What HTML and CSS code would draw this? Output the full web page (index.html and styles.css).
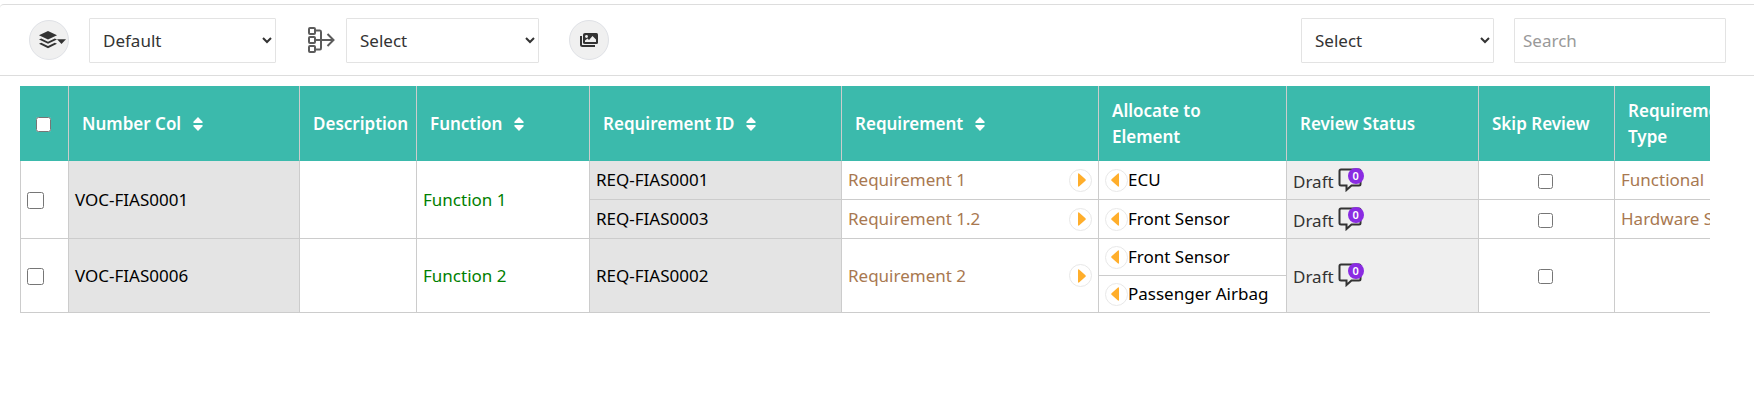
FILE: index.html
```
<!DOCTYPE html>
<html lang="en">
<head>
    <meta charset="UTF-8">
    <meta name="viewport" content="width=device-width, initial-scale=1.0">
    <title>Requirements</title>
    <link rel="stylesheet" href="styles.css">
</head>
<body>
    <!-- shared icons -->
    <svg class="sprite" aria-hidden="true">
        <symbol id="sort" viewBox="0 0 10 14">
            <path d="M5 0L9.6 4.8Q10 6 9 6H1Q0 6 .4 4.8zM5 14L.4 9.200Q0 8 1 8H9Q10 8 9.600 9.200z" fill="#fff"/>
        </symbol>
        <symbol id="caret" viewBox="0 0 8 14">
            <path d="M0 1.200Q0 0 1 .5L7.500 6.300Q8 7 7.500 7.700L1 13.500Q0 14 0 12.800z" fill="#ffae2b"/>
        </symbol>
        <symbol id="comment" viewBox="0 0 24 24">
            <path d="M3 1.500H21Q22.500 1.500 22.500 3V16Q22.500 17.500 21 17.500H13.500L8.500 22V17.500H3Q1.500 17.500 1.500 16V3Q1.500 1.500 3 1.500z" fill="none" stroke="#333" stroke-width="2"/>
        </symbol>
    </svg>

    <div class="toolbar">
        <button class="round-button layers-button" type="button" aria-label="Layers">
            <svg width="27" height="18" viewBox="0 0 27 18" fill="#333">
                <path d="M9 0L18 4.300 9 8.600 0 4.300z"/>
                <path d="M0 8.500L2.200 7.500 9 10.700 15.800 7.500 18 8.500 9 12.800z"/>
                <path d="M0 12.700L2.200 11.700 9 14.900 15.800 11.700 18 12.700 9 17.200z"/>
                <path d="M18 8.200H27L22.500 13z"/>
            </svg>
        </button>
        <select class="field view-select" aria-label="View">
            <option>Default</option>
        </select>
        <svg class="merge-icon" width="28" height="28" viewBox="0 0 28 28" fill="none" stroke="#5c5c5c" stroke-width="2">
            <rect x="2" y="2" width="6" height="6" rx="1"/>
            <rect x="2" y="11" width="6" height="6" rx="1"/>
            <rect x="2" y="20" width="6" height="6" rx="1"/>
            <path d="M8 4.500H13Q14 4.500 14 6V22Q14 23.500 13 23.500H8M8 14H27M20.500 8L26.500 14 20.500 20"/>
        </svg>
        <select class="field" aria-label="Merge">
            <option>Select</option>
        </select>
        <button class="round-button image-button" type="button" aria-label="Images">
            <svg width="18" height="14" viewBox="0 0 18 14">
                <path d="M1 3V11.500Q1 13 2.500 13H15" fill="none" stroke="#333" stroke-width="2"/>
                <path d="M5 0H16.500Q18 0 18 1.500V9.500Q18 11 16.500 11H5Q3 11 3 9.500V1.500Q3 0 5 0z" fill="#333"/>
                <circle cx="6.500" cy="3.500" r="1.400" fill="#f0f0f0"/>
                <path d="M5 9V7.500L7.500 5.500 9 7 12.500 3 16 6.500V9z" fill="#f0f0f0"/>
            </svg>
        </button>
        <select class="field filter-select" aria-label="Filter">
            <option>Select</option>
        </select>
        <input class="field search" type="text" placeholder="Search" aria-label="Search">
    </div>

    <div class="table-wrap">
        <table class="grid">
            <colgroup>
                <col class="col-check">
                <col class="col-number">
                <col class="col-description">
                <col class="col-function">
                <col class="col-req-id">
                <col class="col-req">
                <col class="col-element">
                <col class="col-status">
                <col class="col-skip">
                <col class="col-type">
            </colgroup>
            <thead>
                <tr>
                    <th class="select-all"><input type="checkbox" class="check" aria-label="Select all"></th>
                    <th>Number Col <svg class="sort"><use href="#sort"/></svg></th>
                    <th>Description</th>
                    <th>Function <svg class="sort"><use href="#sort"/></svg></th>
                    <th>Requirement ID <svg class="sort"><use href="#sort"/></svg></th>
                    <th>Requirement <svg class="sort"><use href="#sort"/></svg></th>
                    <th class="allocate">Allocate to Element</th>
                    <th>Review Status</th>
                    <th>Skip Review</th>
                    <th>Requirement Type</th>
                </tr>
            </thead>
            <tbody>
                <tr class="row">
                    <td class="first" rowspan="2"><input type="checkbox" class="check check-row" aria-label="Select VOC-FIAS0001"></td>
                    <td class="locked" rowspan="2">VOC-FIAS0001</td>
                    <td rowspan="2"></td>
                    <td class="function" rowspan="2">Function 1</td>
                    <td class="locked">REQ-FIAS0001</td>
                    <td class="brown"><div class="split">Requirement 1<button class="arrow" type="button" aria-label="Expand"><svg><use href="#caret"/></svg></button></div></td>
                    <td><div class="element"><button class="arrow back" type="button" aria-label="Back"><svg><use href="#caret"/></svg></button>ECU</div></td>
                    <td class="status"><div class="review">Draft<span class="comment"><svg><use href="#comment"/></svg><span class="badge">0</span></span></div></td>
                    <td class="skip"><input type="checkbox" class="check" aria-label="Skip review of REQ-FIAS0001"></td>
                    <td class="brown">Functional</td>
                </tr>
                <tr class="row">
                    <td class="locked">REQ-FIAS0003</td>
                    <td class="brown"><div class="split">Requirement 1.2<button class="arrow" type="button" aria-label="Expand"><svg><use href="#caret"/></svg></button></div></td>
                    <td><div class="element"><button class="arrow back" type="button" aria-label="Back"><svg><use href="#caret"/></svg></button>Front Sensor</div></td>
                    <td class="status"><div class="review">Draft<span class="comment"><svg><use href="#comment"/></svg><span class="badge">0</span></span></div></td>
                    <td class="skip"><input type="checkbox" class="check" aria-label="Skip review of REQ-FIAS0003"></td>
                    <td class="brown">Hardware Spec</td>
                </tr>
                <tr class="row-split">
                    <td class="first" rowspan="2"><input type="checkbox" class="check check-row" aria-label="Select VOC-FIAS0006"></td>
                    <td class="locked" rowspan="2">VOC-FIAS0006</td>
                    <td rowspan="2"></td>
                    <td class="function" rowspan="2">Function 2</td>
                    <td class="locked" rowspan="2">REQ-FIAS0002</td>
                    <td class="brown" rowspan="2"><div class="split">Requirement 2<button class="arrow" type="button" aria-label="Expand"><svg><use href="#caret"/></svg></button></div></td>
                    <td><div class="element"><button class="arrow back" type="button" aria-label="Back"><svg><use href="#caret"/></svg></button>Front Sensor</div></td>
                    <td class="status" rowspan="2"><div class="review">Draft<span class="comment"><svg><use href="#comment"/></svg><span class="badge">0</span></span></div></td>
                    <td class="skip" rowspan="2"><input type="checkbox" class="check" aria-label="Skip review of REQ-FIAS0002"></td>
                    <td rowspan="2"></td>
                </tr>
                <tr class="row-split">
                    <td><div class="element"><button class="arrow back" type="button" aria-label="Back"><svg><use href="#caret"/></svg></button>Passenger Airbag</div></td>
                </tr>
            </tbody>
        </table>
    </div>
</body>
</html>
```
FILE: styles.css
```
* {
    box-sizing: border-box;
}

body {
    margin: 0;
    padding-top: 4px;
    background: #fff;
    color: #000;
    font-family: "Noto Sans", "Open Sans", sans-serif;
    font-size: 17px;
    line-height: 26px;
}

.sprite {
    display: none;
}

/* Toolbar */
.toolbar {
    display: flex;
    align-items: center;
    height: 72px;
    padding: 0 28px 0 29px;
    border-top: 1px solid #ddd;
    border-bottom: 1px solid #ddd;
    border-top-left-radius: 4px;
}

.round-button {
    display: flex;
    align-items: center;
    justify-content: center;
    width: 40px;
    height: 40px;
    padding: 0;
    border: 1px solid #dfe1e6;
    border-radius: 50%;
    background: #f0f0f0;
    cursor: pointer;
}

.layers-button {
    padding-left: 6px;
    margin-right: 20px;
}

.image-button {
    margin-left: 30px;
}

.field {
    width: 193px;
    height: 45px;
    padding: 0 0 0 9px;
    border: 1px solid #e3e3e3;
    border-radius: 1px;
    background: #fff;
    color: #333;
    font: inherit;
}

.view-select {
    width: 187px;
}

.merge-icon {
    margin: 0 11px 0 31px;
}

.filter-select {
    margin-left: auto;
    margin-right: 20px;
}

.search {
    width: 212px;
    padding: 0 8px;
}

.search::placeholder {
    color: #999;
}

/* Table */
.table-wrap {
    margin: 10px 44px 0 20px;
    overflow: hidden;
}

.grid {
    width: 1745px;
    table-layout: fixed;
    border-collapse: separate;
    border-spacing: 0;
}

.col-check { width: 49px; }
.col-number { width: 231px; }
.col-description { width: 117px; }
.col-function { width: 173px; }
.col-req-id { width: 252px; }
.col-req { width: 257px; }
.col-element { width: 188px; }
.col-status { width: 192px; }
.col-skip { width: 136px; }
.col-type { width: 150px; }

.grid th {
    height: 75px;
    padding: 1px 4px 0 13px;
    border-right: 1px solid #ccc;
    border-bottom: 1px solid #3bbaac;
    background: #3bbaac;
    color: #fff;
    font-weight: 600;
    text-align: left;
}

.grid .select-all {
    padding-left: 16px;
}

.grid .allocate {
    padding-right: 40px;
}

.sort {
    width: 10px;
    height: 14px;
    margin-left: 7px;
    vertical-align: -1px;
}

.grid td {
    padding: 0 6px;
    border-right: 1px solid #ccc;
    border-bottom: 1px solid #ccc;
}

.grid .first {
    border-left: 1px solid #ccc;
}

.row {
    height: 39px;
}

.row-split {
    height: 37px;
}

.grid .locked {
    background: #e4e4e4;
}

.grid .function {
    color: #008000;
}

.grid .brown {
    color: #a87850;
}

.grid .status {
    background: #efefef;
    color: #333;
}

.grid .skip {
    padding-right: 8px;
    text-align: center;
}

.check {
    display: inline-block;
    width: 15px;
    height: 15px;
    margin: 0;
    vertical-align: middle;
}

.check-row {
    width: 17px;
    height: 17px;
}

.split,
.element,
.review {
    display: flex;
    align-items: center;
}

.split {
    justify-content: space-between;
}

.arrow {
    display: flex;
    align-items: center;
    justify-content: center;
    width: 23px;
    height: 23px;
    padding: 0 0 0 2px;
    border: 1px solid #e8e8e8;
    border-radius: 50%;
    background: #fff;
    cursor: pointer;
}

.arrow svg {
    width: 8px;
    height: 14px;
}

.back {
    transform: rotate(180deg);
}

.review {
    padding-top: 3px;
}

.comment {
    position: relative;
    width: 24px;
    height: 24px;
    margin: 0 0 4px 4px;
}

.comment svg {
    display: block;
    width: 24px;
    height: 24px;
}

.badge {
    position: absolute;
    top: 0;
    right: -2px;
    width: 16px;
    height: 16px;
    border-radius: 50%;
    background: #8a2be2;
    color: #fff;
    font-size: 11px;
    font-weight: 600;
    line-height: 16px;
    text-align: center;
}
```
